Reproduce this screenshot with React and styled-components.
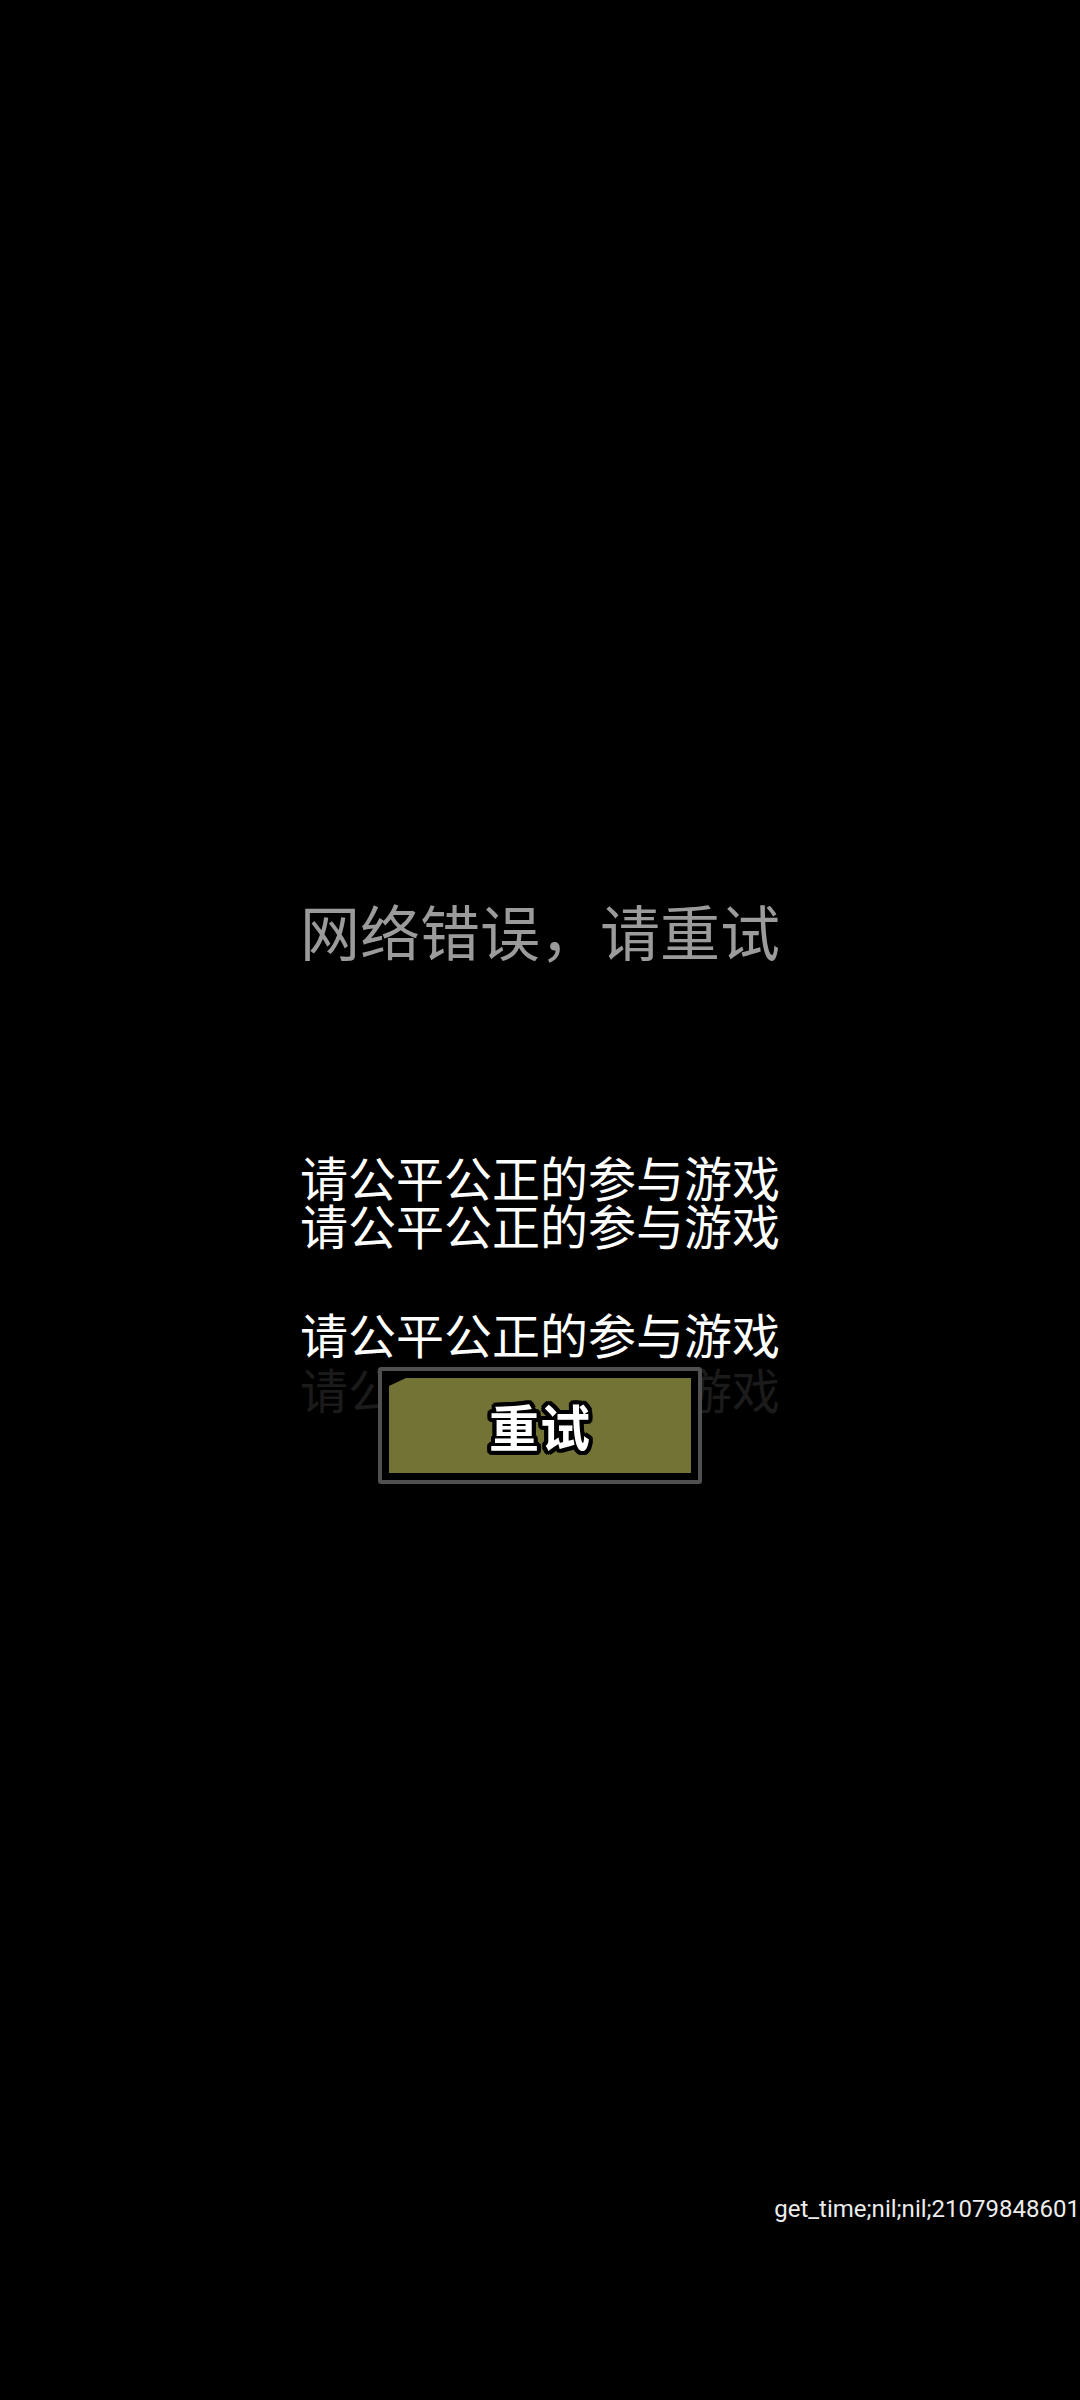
import styled, { createGlobalStyle } from 'styled-components';

const GlobalStyle = createGlobalStyle`
  html, body {
    margin: 0;
    padding: 0;
    background: #000;
  }
  body {
    font-family: "Noto Sans CJK SC", "Noto Sans", sans-serif;
  }
`;

const Screen = styled.div`
  width: 1080px;
  height: 2400px;
  background: #000;
  display: flex;
  flex-direction: column;
  align-items: center;
  overflow: hidden;
`;

const Title = styled.div`
  margin-top: 888px;
  font-size: 60px;
  line-height: 84px;
  color: #9b9b9b;
`;

const Notice = styled.div`
  font-size: 48px;
  line-height: ${({ $lh }) => $lh}px;
  color: ${({ $faded }) => ($faded ? '#1b1b1b' : '#ffffff')};
  margin-top: ${({ $gap = 0 }) => $gap}px;
  white-space: nowrap;
`;

const NoticeBlock = styled.div`
  display: flex;
  flex-direction: column;
  align-items: center;
  margin-top: 180px;
`;

const Stack = styled.div`
  display: grid;
  justify-items: center;

  & > * {
    grid-area: 1 / 1;
  }
`;

const RetryFrame = styled.button`
  margin-top: 6px;
  width: 324px;
  height: 117px;
  padding: 7px;
  border: 4px solid #505050;
  border-radius: 3px;
  background: #000;
  display: flex;
  cursor: pointer;
  z-index: 1;
`;

const RetryFace = styled.div`
  flex: 1;
  background: #737335;
  clip-path: polygon(17px 0, 100% 0, 100% 100%, 0 100%, 0 8px);
  display: flex;
  align-items: center;
  justify-content: center;
`;

const RetryLabel = styled.span`
  font-family: "Noto Sans CJK SC", sans-serif;
  font-weight: 700;
  font-size: 50px;
  line-height: 1;
  color: #fff;
  letter-spacing: 1px;
  margin-top: -2px;
  text-shadow:
    -3px -3px 0 #000, 3px -3px 0 #000, -3px 3px 0 #000, 3px 3px 0 #000,
    0 -4px 0 #000, 0 4px 0 #000, -4px 0 0 #000, 4px 0 0 #000,
    -2px -4px 0 #000, 2px -4px 0 #000, -2px 4px 0 #000, 2px 4px 0 #000,
    -4px -2px 0 #000, 4px -2px 0 #000, -4px 2px 0 #000, 4px 2px 0 #000;
`;

const Footer = styled.div`
  margin-top: auto;
  margin-bottom: 176px;
  align-self: stretch;
  display: flex;
  justify-content: flex-end;
  font-family: Roboto, "Liberation Sans", sans-serif;
  font-size: 24px;
  line-height: 30px;
  color: #ececec;
  white-space: nowrap;
`;

const notice = '请公平公正的参与游戏';

export default function App() {
  return (
    <>
      <GlobalStyle />
      <Screen>
        <Title>网络错误，请重试</Title>
        <NoticeBlock>
          <Notice $lh={48}>{notice}</Notice>
          <Notice $lh={48}>{notice}</Notice>
          <Notice $lh={55} $gap={58}>{notice}</Notice>
          <Stack>
            <Notice $lh={55} $faded>{notice}</Notice>
            <RetryFrame>
              <RetryFace>
                <RetryLabel>重试</RetryLabel>
              </RetryFace>
            </RetryFrame>
          </Stack>
        </NoticeBlock>
        <Footer>get_time;nil;nil;21079848601</Footer>
      </Screen>
    </>
  );
}
